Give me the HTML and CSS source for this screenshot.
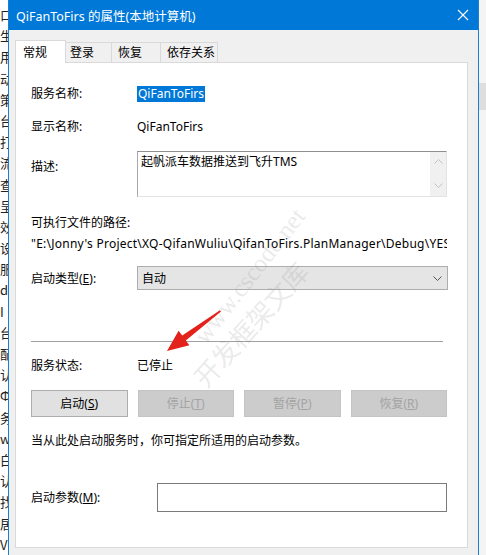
FILE: index.html
```html
<!DOCTYPE html>
<html>
  <head>
    <meta charset="utf-8" />
    <link rel="stylesheet" href="styles.css">
  </head>
  <body>
    <div class="screen">
      <div class="behind">
        <span>口</span><span>生</span><span>用</span><span>动</span><span>策</span>
        <span>台</span><span>打</span><span>流</span><span>查</span><span>呈</span>
        <span>效</span><span>设</span><span>服</span><span>do</span><span>I</span>
        <span>台</span><span>配</span><span>认</span><span>ФR</span><span>务</span>
        <span>w</span><span>白</span><span>认</span><span>找</span><span>居</span>
        <span>V</span>
      </div>

      <div class="window">
        <div class="titlebar">
          <span class="title">QiFanToFirs 的属性(本地计算机)</span>
          <svg class="close" width="12" height="12" viewBox="0 0 12 12">
            <path d="M1 1 L11 11 M11 1 L1 11" stroke="#fff" stroke-width="1.1" fill="none" />
          </svg>
        </div>

        <div class="client">
          <div class="tabs">
            <div class="tab active">常规</div>
            <div class="tab tab-logon">登录</div>
            <div class="tab tab-recover">恢复</div>
            <div class="tab tab-deps">依存关系</div>
          </div>

          <div class="panel">
            <div class="row row-name">
              <span class="label">服务名称:</span>
              <span class="selected">QiFanToFirs</span>
            </div>
            <div class="row row-display">
              <span class="label">显示名称:</span>
              <span>QiFanToFirs</span>
            </div>
            <div class="row row-desc">
              <span class="label">描述:</span>
              <div class="textarea">
                <div class="textarea-text">起帆派车数据推送到飞升TMS</div>
                <div class="scrollbar">
                  <svg width="9" height="5" viewBox="0 0 9 5"><path d="M0.5 4.5 L4.5 0.5 L8.5 4.5" stroke="#c2c2c2" fill="none" /></svg>
                  <svg width="9" height="5" viewBox="0 0 9 5"><path d="M0.5 0.5 L4.5 4.5 L8.5 0.5" stroke="#c2c2c2" fill="none" /></svg>
                </div>
              </div>
            </div>
            <div class="row row-pathlabel">可执行文件的路径:</div>
            <div class="row row-path">"E:\Jonny's Project\XQ-QifanWuliu\QifanToFirs.PlanManager\Debug\YES</div>
            <div class="row row-start">
              <span class="label">启动类型(<u>E</u>):</span>
              <div class="combo">
                <span>自动</span>
                <svg width="9" height="5" viewBox="0 0 9 5"><path d="M0.5 0.5 L4.5 4.5 L8.5 0.5" stroke="#555" fill="none" /></svg>
              </div>
            </div>

            <div class="divider"></div>

            <div class="row row-status">
              <span class="label">服务状态:</span>
              <span>已停止</span>
            </div>
            <div class="buttons">
              <div class="btn">启动(<u>S</u>)</div>
              <div class="btn disabled">停止(<u>T</u>)</div>
              <div class="btn disabled">暂停(<u>P</u>)</div>
              <div class="btn disabled">恢复(<u>R</u>)</div>
            </div>
            <div class="row row-note">当从此处启动服务时，你可指定所适用的启动参数。</div>
            <div class="row row-params">
              <span class="label wide">启动参数(<u>M</u>):</span>
              <div class="input"></div>
            </div>
          </div>
        </div>
      </div>

      <div class="edge">
        <div class="edge-block"></div>
      </div>

      <!-- watermark + annotation arrow lying over the dialog -->
      <div class="watermark wm-site">www.cscode.net</div>
      <div class="watermark wm-name">开发框架文库</div>
      <svg class="arrow" width="486" height="555" viewBox="0 0 486 555">
        <polygon points="167,351 178.6,330.8 182.2,335.6 220,310.2 221,311.6 185.8,340.4 189.4,345.2" fill="#e3221c" />
      </svg>
    </div>
  </body>
</html>
```

FILE: styles.css
```css
:root {
  --accent: #0078d7;
  --face: #f0f0f0;
  --tab-border: #d9d9d9;
  --text: #000;
  --disabled: #a3a3a3;
}

* {
  box-sizing: border-box;
  margin: 0;
  padding: 0;
}

body {
  background: #fff;
  color: var(--text);
  font-family: "Noto Sans", "Noto Sans CJK SC", sans-serif;
  font-size: 12px;
}

.screen {
  position: relative;
  display: flex;
  width: 486px;
  height: 555px;
  overflow: hidden;
}

/* Window behind the dialog */
.behind {
  width: 8px;
  flex-shrink: 0;
  overflow: hidden;
  padding-top: 4px;
  background: #fff;
  font-family: "Noto Sans CJK SC", sans-serif;
  font-size: 13px;
  color: #222;
}

.behind span {
  display: block;
  height: 21.2px;
  line-height: 21.2px;
  white-space: nowrap;
}

/* Dialog window */
.window {
  width: 471px;
  flex-shrink: 0;
  border-left: 1px solid #1a7fd4;
  border-right: 1px solid #1a7fd4;
  background: var(--face);
  display: flex;
  flex-direction: column;
}

.titlebar {
  height: 30px;
  background: var(--accent);
  display: flex;
  align-items: center;
  justify-content: space-between;
  padding: 0 9px 0 7px;
}

.title {
  color: #fff;
  font-size: 12.5px;
  white-space: nowrap;
}

.client {
  padding: 10px 10px 0 6px;
}

/* Tabs */
.tabs {
  display: flex;
  align-items: flex-end;
  height: 22px;
}

.tab {
  height: 20px;
  line-height: 19px;
  background: var(--face);
  border-top: 1px solid var(--tab-border);
  border-right: 1px solid var(--tab-border);
  white-space: nowrap;
}

.tab.active {
  position: relative;
  z-index: 1;
  width: 51px;
  height: 23px;
  line-height: 23px;
  margin-bottom: -1px;
  padding-left: 7px;
  background: #fff;
  border-left: 1px solid var(--tab-border);
}

.tab-logon {
  width: 46px;
  padding-left: 4px;
}

.tab-recover {
  width: 49px;
  padding-left: 6px;
}

.tab-deps {
  width: 57px;
  padding-left: 6px;
}

/* Tab page */
.panel {
  height: 486px;
  background: #fff;
  border: 1px solid var(--tab-border);
  padding: 0 20px 0 15px;
}

.row {
  display: flex;
  align-items: flex-start;
  line-height: 17px;
  white-space: nowrap;
}

.label {
  width: 106px;
  flex-shrink: 0;
}

.label.wide {
  width: 126px;
}

.row-name {
  margin-top: 22px;
  height: 17px;
}

.selected {
  background: var(--accent);
  color: #fff;
  height: 16px;
  line-height: 16px;
  margin-top: 1px;
  padding: 0 1px;
}

.row-display {
  margin-top: 16px;
  height: 17px;
}

.row-desc {
  margin-top: 16px;
}

.row-desc .label {
  padding-top: 7px;
}

.textarea {
  flex: 1;
  height: 46px;
  display: flex;
  border-top: 1px solid #8f8f8f;
  border-left: 1px solid #a8a8a8;
  border-right: 1px solid #e3e3e3;
  border-bottom: 1px solid #e3e3e3;
}

.textarea-text {
  flex: 1;
  padding: 1px 3px;
}

.scrollbar {
  width: 16px;
  background: var(--face);
  display: flex;
  flex-direction: column;
  justify-content: space-between;
  align-items: center;
  padding: 7px 0 8px;
}

.row-pathlabel {
  margin-top: 17px;
}

.row-path {
  margin-top: 4px;
  overflow: hidden;
  letter-spacing: 0.25px;
}

.row-start {
  margin-top: 14px;
  align-items: center;
  height: 24px;
}

.combo {
  flex: 1;
  height: 24px;
  background: #e5e5e5;
  border: 1px solid #adadad;
  display: flex;
  align-items: center;
  justify-content: space-between;
  padding: 0 5px 0 4px;
  margin-right: -1px;
}

.divider {
  margin-top: 51px;
  margin-right: 4px;
  height: 1px;
  background: #a0a0a0;
}

.row-status {
  margin-top: 15px;
  height: 17px;
}

.buttons {
  display: grid;
  grid-template-columns: repeat(4, 1fr);
  gap: 10px;
  margin-top: 16px;
}

.btn {
  height: 27px;
  line-height: 25px;
  text-align: center;
  background: #e1e1e1;
  border: 1px solid #adadad;
}

.btn.disabled {
  background: #cccccc;
  border-color: #c4c4c4;
  color: var(--disabled);
}

.row-note {
  margin-top: 15px;
}

.row-params {
  margin-top: 34px;
  align-items: center;
}

.input {
  flex: 1;
  height: 29px;
  border: 1px solid #7a7a7a;
}

/* Right edge of the screen */
.edge {
  flex: 1;
  background: #f4f4f4;
  padding-top: 83px;
}

.edge-block {
  height: 27px;
  background: #dedede;
}

/* Overlays */
.watermark {
  position: absolute;
  color: rgba(130, 130, 130, 0.18);
  white-space: nowrap;
  transform-origin: center;
}

.wm-site {
  left: 168px;
  top: 262px;
  font-family: "Liberation Serif", serif;
  font-size: 25px;
  transform: rotate(-52deg);
}

.wm-name {
  left: 172px;
  top: 305px;
  font-family: "Noto Sans CJK SC", sans-serif;
  font-size: 26px;
  transform: rotate(-48deg);
}

.arrow {
  position: absolute;
  left: 0;
  top: 0;
}
```
